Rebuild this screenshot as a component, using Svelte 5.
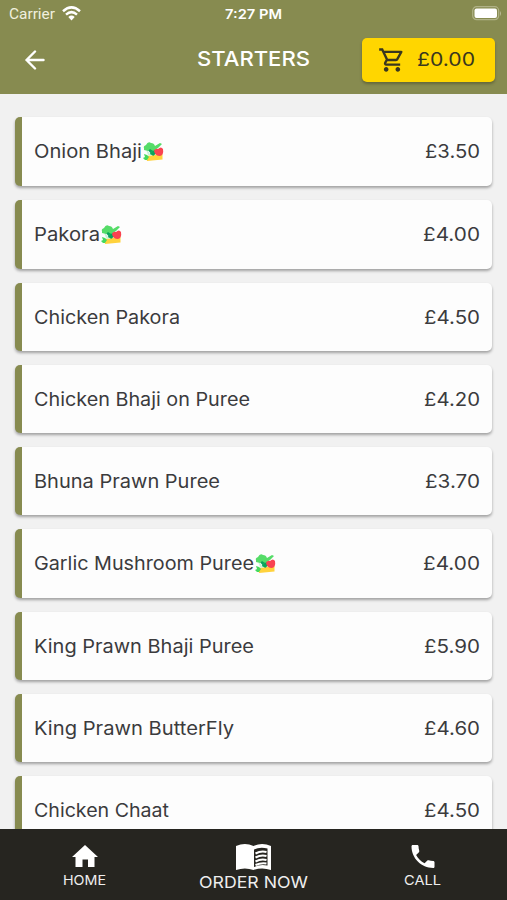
<script>
  const items = [
    { name: 'Onion Bhaji', width: 108, price: '£3.50', priceWidth: 55, veg: true },
    { name: 'Pakora', width: 66, price: '£4.00', priceWidth: 57, veg: true },
    { name: 'Chicken Pakora', width: 146, price: '£4.50', priceWidth: 56 },
    { name: 'Chicken Bhaji on Puree', width: 216, price: '£4.20', priceWidth: 56 },
    { name: 'Bhuna Prawn Puree', width: 186, price: '£3.70', priceWidth: 55 },
    { name: 'Garlic Mushroom Puree', width: 220, price: '£4.00', priceWidth: 57, veg: true },
    { name: 'King Prawn Bhaji Puree', width: 220, price: '£5.90', priceWidth: 56 },
    { name: 'King Prawn ButterFly', width: 200, price: '£4.60', priceWidth: 56 },
    { name: 'Chicken Chaat', width: 135, price: '£4.50', priceWidth: 56 }
  ];
</script>

{#snippet label(text, width, size)}
  <svg class="label" {width} height="24" font-size={size}>
    <text x="0" y="18" textLength={width} lengthAdjust="spacingAndGlyphs">{text}</text>
  </svg>
{/snippet}

<div class="screen">
  <header>
    <div class="status">
      <div class="carrier">
        {@render label('Carrier', 46, 14)}
        <svg width="19" height="15" viewBox="0 0 19 15" fill="none" stroke="#fff" stroke-width="2.5">
          <path d="M1 5.2Q9.500-2.500 18 5.200M4 8.600Q9.500 3.700 15 8.600" />
          <path d="M6.300 11Q9.500 8.200 12.700 11L9.500 14.500Z" fill="#fff" stroke="none" />
        </svg>
      </div>
      <div class="time">{@render label('7:27 PM', 57, 13.5)}</div>
      <svg class="battery" width="30" height="15" viewBox="0 0 30 15">
        <rect x=".7" y=".7" width="26" height="13" rx="4" fill="none" stroke="#b0b287" stroke-width="1.200" />
        <rect x="2.500" y="2.500" width="22.500" height="9.500" rx="2" fill="#fff" />
        <path d="M28 5v5q2-2.500 0-5" fill="#b9bb95" />
      </svg>
    </div>
    <div class="bar">
      <svg class="back" width="20" height="20" viewBox="0 0 20 20" fill="none" stroke="#fff" stroke-width="2.400" stroke-linecap="round" stroke-linejoin="round">
        <path d="M18.500 10H1.500M10 1.500L1.500 10L10 18.500" />
      </svg>
      <h1>{@render label('STARTERS', 113, 20.5)}</h1>
      <button class="cart" aria-label="Basket">
        <svg width="28" height="28" viewBox="0 0 24 24" fill="#39371f">
          <path d="M15.550 13c.75 0 1.410-.41 1.750-1.030l3.580-6.490A.996.996 0 0 0 20.010 4H5.210l-.94-2H1v2h2l3.600 7.590-1.350 2.440C4.520 15.370 5.480 17 7 17h12v-2H7l1.100-2h7.450zM6.160 6h12.150l-2.760 5H8.530L6.160 6zM7 18c-1.100 0-1.990.9-1.990 2S5.900 22 7 22s2-.9 2-2-.9-2-2-2zm10 0c-1.100 0-1.990.9-1.990 2s.89 2 1.990 2 2-.9 2-2-.9-2-2-2z" />
        </svg>
        {@render label('£0.00', 58, 18.5)}
      </button>
    </div>
  </header>

  <main>
    {#each items as item}
      <div class="card" class:tall={item.veg}>
        <div class="name">
          {@render label(item.name, item.width, 18.5)}
          {#if item.veg}
            <svg class="veg" width="21" height="20" viewBox="0 0 21 20">
              <path d="M3 14L19.500 12L19.500 17.500L4 19Z" fill="#ffd23c" />
              <path d="M4 7L10 14L14 11L11 7Z" fill="#08a45b" />
              <path d="M1 6Q0 4 3 3Q5-1 8 1Q11 1 12 4L17 1L19 2L15 6L10 9L7 7L5 9L1 8Z" fill="#55dc68" />
              <path d="M11 9Q12 6 15 7Q18 4 20 7Q21 13 17 14Q12 14 11 9Z" fill="#f94350" />
              <path d="M3.500 9L5 9L7 12L9 9.500L10 10L8 14L5 13Z" fill="#c9f3d8" />
              <path d="M5 8.500L7 11.500L9.500 8.500L11 12L8 13Z" fill="#08a45b" />
              <path d="M1 12L4 13L6 15L4 18L2 18L0 16L2 15Z" fill="#43da5e" />
            </svg>
          {/if}
        </div>
        {@render label(item.price, item.priceWidth, 18.5)}
      </div>
    {/each}
  </main>

  <nav>
    <div class="tab">
      <svg class="icon" width="26" height="23" viewBox="0 0 26 23" fill="#fff">
        <path d="M13 0L26 12H22.500V22H16V14.500H10.500V22H3.500V12H0Z" />
      </svg>
      {@render label('HOME', 43, 13.5)}
    </div>
    <div class="tab order">
      <svg class="icon" width="35" height="27" viewBox="0 0 35 27">
        <path d="M0 2Q9-2 17.500 2Q26-2 35 2V26Q26 23 17.500 26Q9 23 0 26Z" fill="#fff" />
        <path d="M18 5.500Q24 2.500 31.500 4.500V21.500Q24 20 18 23Z" fill="#262520" />
        <path d="M19.500 9.500Q25 6.500 30.500 8M19.500 13.500Q25 10.500 30.500 12M19.500 17.500Q25 14.500 30.500 16M19.500 21Q25 18.500 30.500 19.500" fill="none" stroke="#fff" stroke-width="2" />
      </svg>
      {@render label('ORDER NOW', 109, 16.5)}
    </div>
    <div class="tab">
      <svg class="icon" width="24" height="23" viewBox="3 3 18 18" fill="#fff">
        <path d="M6.620 10.790c1.440 2.830 3.760 5.140 6.590 6.590l2.200-2.200c.27-.27.67-.36 1.020-.24 1.120.37 2.330.57 3.570.57.55 0 1 .45 1 1V20c0 .55-.45 1-1 1-9.390 0-17-7.610-17-17 0-.55.45-1 1-1h3.500c.55 0 1 .45 1 1 0 1.250.2 2.450.57 3.570.11.35.03.74-.25 1.020l-2.200 2.200z" />
      </svg>
      {@render label('CALL', 37, 13.5)}
    </div>
  </nav>
</div>

<style>
  :global(body) { margin: 0; }
  .screen {
    width: 507px;
    height: 900px;
    display: flex;
    flex-direction: column;
    overflow: hidden;
    background: #f1f1f1;
    font-family: Inter, 'Open Sans', sans-serif;
  }
  svg { display: block; flex: none; }
  .label { overflow: visible; fill: currentColor; }
  header { height: 94px; flex: none; background: #878b50; color: #fff; }
  .status {
    height: 28px;
    display: grid;
    grid-template-columns: 1fr 57px 1fr;
    font-family: Inter, sans-serif;
  }
  .carrier { display: flex; gap: 7px; padding-left: 9px; color: #f0f0df; font-family: Roboto, sans-serif; }
  .carrier .label { margin-top: 1px; }
  .carrier svg:last-child { margin-top: 6px; }
  .time { font-weight: 600; margin-top: 1px; }
  .battery { justify-self: end; margin: 6px 5px 0 0; }
  .bar { display: grid; grid-template-columns: 1fr 113px 1fr; height: 66px; }
  .back { margin: 22px 0 0 25px; }
  h1 { margin: 20px 0 0; font-weight: 450; }
  .cart {
    justify-self: end;
    box-sizing: border-box;
    width: 133px;
    height: 44px;
    margin: 10px 12px 0 0;
    padding: 0 0 0 16px;
    display: flex;
    align-items: center;
    gap: 11px;
    border: 0;
    border-radius: 5px;
    background: #ffd600;
    color: #39371f;
    font-family: inherit;
    font-weight: 400;
    box-shadow: 0 2px 3px #0004;
  }
  main {
    flex: 1;
    min-height: 0;
    overflow: hidden;
    display: flex;
    flex-direction: column;
    gap: 14px;
    padding: 23px 15px 0;
  }
  .card {
    height: 68px;
    flex: none;
    box-sizing: border-box;
    display: flex;
    align-items: center;
    justify-content: space-between;
    padding: 1px 12px 0 12px;
    border-left: 7px solid #878b50;
    border-radius: 5px;
    background: #fdfdfd;
    color: #3b3b3d;
    font-weight: 400;
    box-shadow: 0 2px 3px #0005;
  }
  .tall { height: 69px; padding-top: 0; }
  .name { display: flex; gap: 1px; align-items: center; }
  nav {
    height: 71px;
    flex: none;
    display: grid;
    grid-template-columns: repeat(3, 1fr);
    background: #262520;
    color: #eee;
  }
  .tab { display: flex; flex-direction: column; align-items: center; padding-top: 16px; }
  .tab .label { margin-top: -1px; }
  .order { padding-top: 15px; }
</style>
